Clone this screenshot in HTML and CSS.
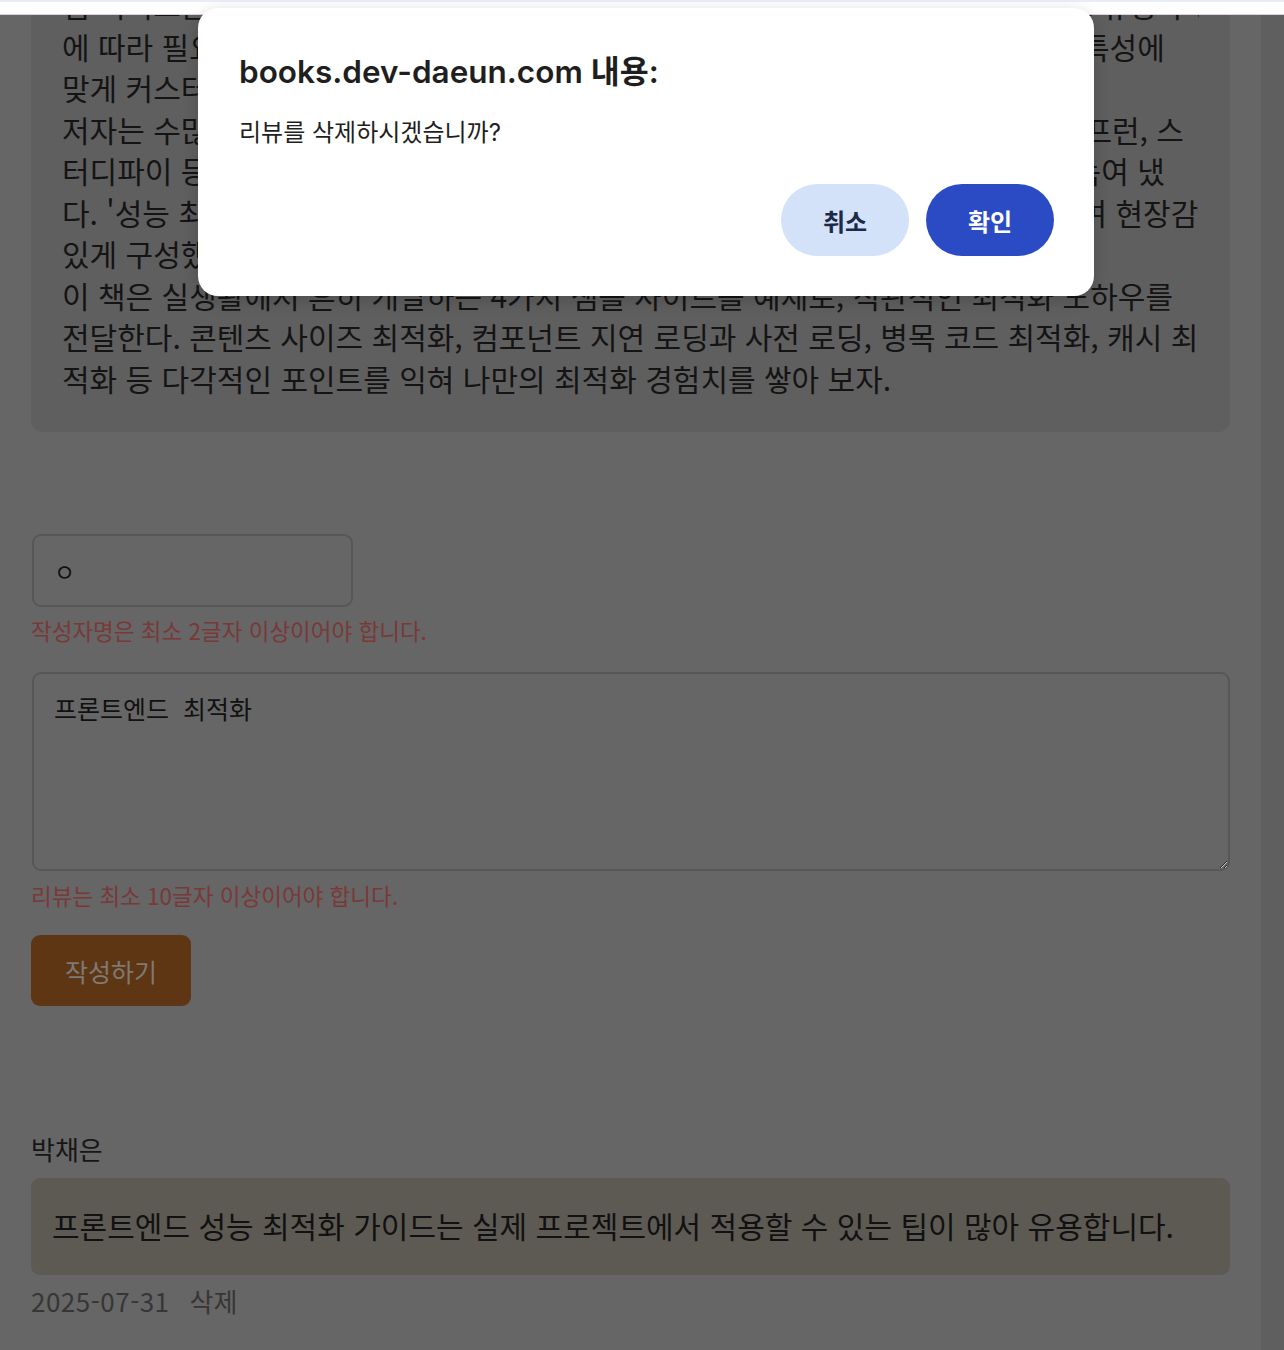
FILE: index.html
```html
<!DOCTYPE html>
<html lang="ko">
<head>
<meta charset="utf-8">
<title>리뷰</title>
<link rel="stylesheet" href="styles.css">
</head>
<body>
<div class="chrome"></div>
<div class="viewport">
  <main class="page">
    <div class="page-inner">
      <section class="desc">
        <p class="desc-text">웹 서비스를 성능 최적화하려면 사용자 경험을 좌우하는 요소를 알아야 하며, 서비스 유형과 성능<br>에 따라 필요한 최적화 기법은 저마다 다르다. 이 책은 다양한 웹서비스들의 고유한 특성에<br>맞게 커스터마이징할 수 있는 최적화 기법을 소개한다.<br>저자는 수많은 프로젝트를 진행하며 쌓아 온 노하우와 강의하던 경험을 바탕으로 인프런, 스<br>터디파이 등에서 수강생 분들이 가장 궁금해했던 내용을 모두 이 책 속에 고스란히 녹여 냈<br>다. '성능 최적화'라는 막연한 주제를 실제 예제를 통해, 단계 별로 직접 익히도록 하여 현장감<br>있게 구성했다.<br>이 책은 실생활에서 흔히 개발하는 4가지 샘플 사이트를 예제로, 직관적인 최적화 노하우를<br>전달한다. 콘텐츠 사이즈 최적화, 컴포넌트 지연 로딩과 사전 로딩, 병목 코드 최적화, 캐시 최<br>적화 등 다각적인 포인트를 익혀 나만의 최적화 경험치를 쌓아 보자.</p>
      </section>

      <form class="review-form">
        <input class="name-input" type="text" value="ㅇ">
        <p class="error">작성자명은 최소 2글자 이상이어야 합니다.</p>
        <textarea class="review-input">프론트엔드  최적화</textarea>
        <p class="error">리뷰는 최소 10글자 이상이어야 합니다.</p>
        <button class="submit" type="button">작성하기</button>
      </form>

      <section class="review">
        <div class="review-author">박채은</div>
        <div class="review-body">프론트엔드 성능 최적화 가이드는 실제 프로젝트에서 적용할 수 있는 팁이 많아 유용합니다.</div>
        <div class="review-meta"><span class="review-date">2025-07-31</span><span class="review-delete">삭제</span></div>
      </section>
    </div>
  </main>
  <div class="scrollbar"></div>
</div>

<div class="dialog" role="dialog">
  <h1 class="dialog-title">books.dev-daeun.com 내용:</h1>
  <p class="dialog-message">리뷰를 삭제하시겠습니까?</p>
  <div class="dialog-actions">
    <button class="btn btn-cancel" type="button">취소</button>
    <button class="btn btn-ok" type="button">확인</button>
  </div>
</div>
</body>
</html>
```

FILE: styles.css
```css
html, body {
  margin: 0;
  padding: 0;
}
body {
  width: 1284px;
  height: 1350px;
  overflow: hidden;
  background: #666666;
  font-family: "Noto Sans CJK KR", "Noto Sans", sans-serif;
  color: #141414;
  position: relative;
}
.chrome {
  height: 12px;
  background: #ffffff;
  border-top: 2px solid #e9edf5;
  border-bottom: 1px solid #d6d6d6;
  position: relative;
  z-index: 2;
}
.viewport {
  display: flex;
  height: 1335px;
}
.page {
  flex: 1;
  overflow: hidden;
  background: #666666;
}
.page-inner {
  padding: 0 31px;
  margin-top: -62px;
}
.desc {
  background: #5f5f5f;
  border-radius: 12px;
  padding: 31px 31px 33px;
}
.desc-text {
  margin: 0;
  font-size: 30px;
  line-height: 41.5px;
  white-space: nowrap;
  overflow: hidden;
  color: #141414;
}
.review-form {
  margin-top: 102px;
  display: flex;
  flex-direction: column;
  align-items: flex-start;
}
.name-input {
  box-sizing: border-box;
  width: 321px;
  height: 73px;
  margin: 0 0 0 1px;
  border: 2px solid #575757;
  border-radius: 9px;
  background: #666666;
  padding: 0 20px;
  font-family: inherit;
  font-size: 23px;
  color: #111111;
  outline: none;
}
.error {
  margin: 8px 0 0;
  font-size: 22.5px;
  line-height: 30px;
  color: #7a3838;
}
.review-input {
  box-sizing: border-box;
  width: calc(100% - 1px);
  height: 199px;
  margin: 27px 0 0 1px;
  border: 2px solid #575757;
  border-radius: 9px;
  background: #666666;
  padding: 19px 20px;
  font-family: inherit;
  font-size: 25px;
  line-height: 30px;
  color: #111111;
  resize: vertical;
  outline: none;
}
.review-input + .error {
  margin-top: 9px;
}
.submit {
  margin-top: 25px;
  width: 160px;
  height: 71px;
  border: none;
  border-radius: 9px;
  background: #5e3613;
  color: #7e7a76;
  font-family: inherit;
  font-size: 25px;
  padding: 0;
}
.review {
  margin-top: 126px;
}
.review-author {
  font-size: 26px;
  line-height: 34px;
  color: #161616;
}
.review-body {
  margin-top: 12px;
  background: #5d5a53;
  border-radius: 9px;
  padding: 26px 21px 28px;
  font-size: 30px;
  line-height: 43px;
  color: #111111;
}
.review-meta {
  margin-top: 9px;
  display: flex;
  gap: 20px;
  font-size: 26px;
  line-height: 34px;
  color: #363636;
}
.review-date {
  letter-spacing: 0.5px;
}
.scrollbar {
  width: 23px;
  background: #5f5f5f;
}

.dialog {
  position: absolute;
  left: 198px;
  top: 8px;
  width: 896px;
  height: 288px;
  box-sizing: border-box;
  background: #ffffff;
  border-radius: 20px;
  box-shadow: 0 4px 16px rgba(0, 0, 0, 0.18);
  padding: 40px 40px 40px 41px;
  z-index: 5;
  display: flex;
  flex-direction: column;
  font-family: Inter, "Noto Sans CJK KR", sans-serif;
  color: #1f1f1f;
}
.dialog-title {
  margin: 0;
  font-size: 31.5px;
  line-height: 48px;
  font-weight: 600;
}
.dialog-message {
  margin: 21px 0 0;
  font-size: 24px;
  line-height: 32px;
  font-weight: 400;
}
.dialog-actions {
  margin-top: auto;
  display: flex;
  justify-content: flex-end;
  gap: 17px;
}
.btn {
  width: 128px;
  height: 72px;
  border: none;
  border-radius: 36px;
  font-family: "Noto Sans CJK KR", sans-serif;
  font-size: 24px;
  font-weight: 700;
  padding: 0;
}
.btn-cancel {
  background: #d3e1f9;
  color: #1b2a48;
}
.btn-ok {
  background: #2b4bc4;
  color: #ffffff;
}
```
